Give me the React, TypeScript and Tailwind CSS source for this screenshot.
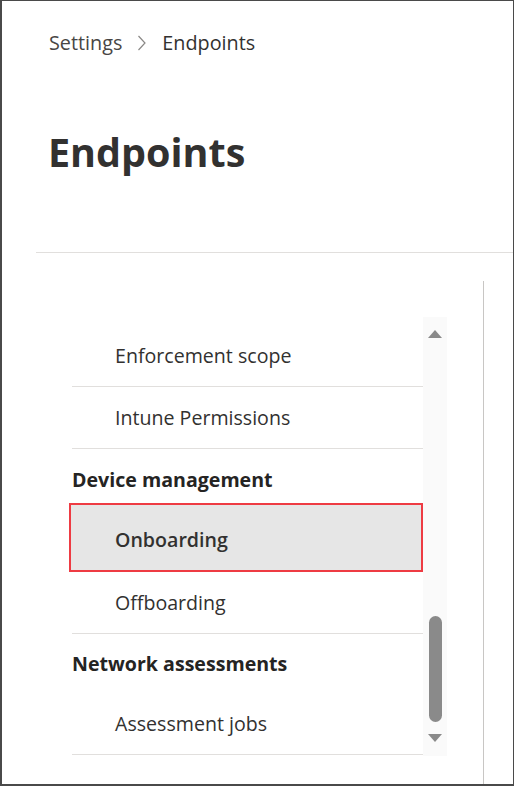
import React from "react";

function Row({ label }: { label: string }) {
  return (
    <div className="h-[62px] shrink-0 border-b border-[#e1dfdd] flex items-center pl-[43px] text-[19.6px] text-[#323130]">
      {label}
    </div>
  );
}

export default function App() {
  return (
    <div
      className="w-[514px] h-[786px] bg-white border-t border-r border-l-2 border-b-2 border-[#4a4a4a] flex flex-col overflow-hidden"
      style={{ fontFamily: '"Open Sans", "Noto Sans", sans-serif' }}
    >
      <div className="pl-[47px] pt-[27px] h-[56px] flex items-center gap-[15px] text-[19.8px] leading-[28px]">
        <span className="text-[#484644]">Settings</span>
        <svg width="10" height="16" viewBox="0 0 10 16" className="mt-[1px]">
          <polyline points="1.5,1 8,8 1.5,15" fill="none" stroke="#8a8886" strokeWidth="1.2" />
        </svg>
        <span className="text-[#323130]">Endpoints</span>
      </div>
      <h1 className="mt-[67px] pl-[46px] h-[56px] text-[39.5px] leading-[56px] font-bold text-[#323130]">
        Endpoints
      </h1>
      <div className="mt-[72px] ml-[34px] h-px bg-[#e1dfdd] shrink-0" />
      <div className="flex flex-1 min-h-0">
        <div className="ml-[70px] pt-[64px] w-[375px] shrink-0">
          <div className="flex h-[439px]">
            <div className="w-[351px] h-[439px] overflow-visible flex flex-col pt-[8px]">
              <Row label="Enforcement scope" />
              <Row label="Intune Permissions" />
              <div className="h-[54px] shrink-0 pt-[19px] text-[19.6px] leading-[24px] font-bold text-[#252423]">
                Device management
              </div>
              <div className="-ml-[3px] w-[354px] h-[69px] shrink-0 border-2 border-[#ee3b43] bg-[#e6e6e6] flex items-center pl-[44px] pt-[4px] text-[19.6px] font-semibold text-[#323130]">
                Onboarding
              </div>
              <Row label="Offboarding" />
              <div className="h-[60px] shrink-0 flex items-center text-[19.6px] font-bold text-[#252423]">
                Network assessments
              </div>
              <div className="h-[61px] shrink-0 border-b border-[#e1dfdd] flex items-center pl-[43px] text-[19.6px] text-[#323130]">
                Assessment jobs
              </div>
            </div>
            <div className="w-[24px] h-[439px] bg-[#fafafa] flex flex-col items-center pt-[13px]">
              <svg width="14" height="8" viewBox="0 0 14 8">
                <polygon points="0,8 7,0 14,8" fill="#8a8a8a" />
              </svg>
              <div className="mt-[278px] w-[13px] h-[106px] rounded-full bg-[#8a8a8a] ml-[1px]" />
              <svg width="14" height="8" viewBox="0 0 14 8" className="mt-[12px]">
                <polygon points="0,0 14,0 7,8" fill="#8a8a8a" />
              </svg>
            </div>
          </div>
        </div>
        <div className="ml-[36px] mt-[28px] w-px bg-[#c8c6c4] shrink-0" />
      </div>
    </div>
  );
}
